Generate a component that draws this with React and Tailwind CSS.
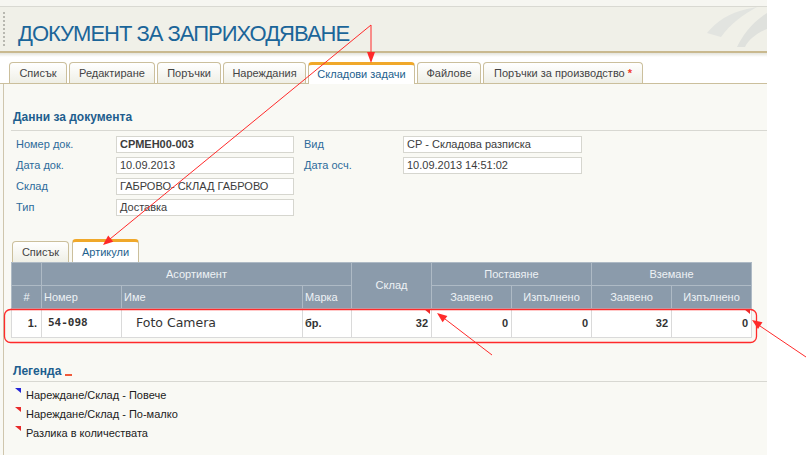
import React from "react";

const tabs = [
  { label: "Списък", w: "w-[58px]" },
  { label: "Редактиране", w: "w-[86px]" },
  { label: "Поръчки", w: "w-[64px]" },
  { label: "Нареждания", w: "w-[83px]" },
  { label: "Складови задачи", w: "w-[107px]", active: true },
  { label: "Файлове", w: "w-[64px]" },
  { label: "Поръчки за производство", w: "w-[160px]", star: true },
];

function Tab({ label, w, active, star }) {
  return (
    <div
      className={
        "h-[21px] flex items-center justify-center rounded-t-[4px] border border-b-0 text-[11px] " +
        w +
        (active
          ? " bg-white border-[#cbbf9c] border-t-[3px] border-t-[#f0a82a] text-[#1d5f8e] -mb-px h-[22px]"
          : " bg-gradient-to-b from-white to-[#efefe6] border-[#cbbf9c] text-[#444]")
      }
    >
      {label}
      {star && <span className="text-[#f03c2c] ml-[3px] font-bold">*</span>}
    </div>
  );
}

function Field({ label, value, bold, inputW = "w-[178px]", labelW = "w-[100px]" }) {
  return (
    <div className="flex items-center h-[17px]">
      <div className={labelW + " text-[11px] text-[#2d6b9b]"}>{label}</div>
      <div
        className={
          inputW +
          " h-[17px] bg-white border border-[#d6d6cf] px-[3px] flex items-center text-[11px] text-[#3c3c3c]" +
          (bold ? " font-bold" : "")
        }
      >
        {value}
      </div>
    </div>
  );
}

function Marker({ color }) {
  return (
    <svg width="6" height="5" className="absolute top-0 right-[1px]">
      <polygon points="0,0 6,0 6,5" fill={color} />
    </svg>
  );
}

export default function App() {
  const th = "border border-[#aebac5] font-normal text-[11px] text-[#eef2f5]";
  const td = "border border-[#dadada] h-[29px] text-[11px] font-bold text-[#333] relative";

  return (
    <div className="w-[806px] h-[455px] bg-white relative overflow-hidden font-['Liberation_Sans',Arial,sans-serif]">
      <div className="w-[767px] h-full bg-[#f9f9f4] flex flex-col">
        {/* header */}
        <div className="h-[7px] bg-[#f6f6f1] border-b border-[#d9d9d2]" />
        <div className="h-[46px] bg-[#f0f0e8] border-b-2 border-[#c9b98f] relative flex items-center">
          <div className="absolute left-[3px] top-[5px] h-[34px] border-l-2 border-dotted border-[#b8b8b0]" />
          <h1 className="ml-[18px] mt-[10px] text-[22px] tracking-[-1px] text-[#1b6599] leading-none">
            ДОКУМЕНТ ЗА ЗАПРИХОДЯВАНЕ
          </h1>
          <svg className="absolute right-0 top-0" width="80" height="44" viewBox="0 0 80 44">
            <path d="M20 26 C30 14 42 6 60 2 L70 0 C56 8 44 16 34 30 Z" fill="#e2e4e0" />
            <path d="M50 40 C56 28 64 16 80 6 L80 22 C70 26 62 32 58 40 Z" fill="#dfe1dd" />
          </svg>
        </div>
        <div className="h-[4px] bg-gradient-to-b from-[#e4e4dc] to-white" />

        {/* main tabs */}
        <div className="bg-white pt-[5px] pl-[9px] flex items-end gap-[2px] border-b border-[#cbbf9c]">
          {tabs.map((t) => (
            <Tab key={t.label} {...t} />
          ))}
        </div>

        {/* panel */}
        <div className="flex-1 ml-[3px] border-l border-[#cfc6ad] bg-[#f9f9f4] pl-[7px]">
          <div className="mt-[27px] h-[20px] border-b border-[#d8d8d2] pl-[2px] text-[12px] font-bold text-[#1e5e8e] leading-none">
            Данни за документа
          </div>
          <div className="mt-[5px] pl-[5px] flex gap-[10px]">
            <div className="flex flex-col gap-[4px]">
              <Field label="Номер док." value="СРМЕН00-003" bold />
              <Field label="Дата док." value="10.09.2013" />
              <Field label="Склад" value="ГАБРОВО- СКЛАД ГАБРОВО" />
              <Field label="Тип" value="Доставка" />
            </div>
            <div className="flex flex-col gap-[4px]">
              <Field label="Вид" value="СР - Складова разписка" labelW="w-[99px]" inputW="w-[179px]" />
              <Field label="Дата осч." value="10.09.2013 14:51:02" labelW="w-[99px]" inputW="w-[179px]" />
            </div>
          </div>

          {/* sub tabs */}
          <div className="mt-[23px] pl-[1px] flex items-end gap-[3px] h-[23px]">
            <div className="w-[57px] h-[21px] rounded-t-[4px] border border-b-0 border-[#cbbf9c] bg-gradient-to-b from-white to-[#efefe6] flex items-center justify-center text-[11px] text-[#444]">
              Списък
            </div>
            <div className="w-[67px] h-[23px] rounded-t-[4px] border border-b-0 border-[#cbbf9c] border-t-[3px] border-t-[#f0a82a] bg-white flex items-center justify-center text-[11px] text-[#1d5f8e]">
              Артикули
            </div>
          </div>

          {/* table */}
          <table className="border-collapse table-fixed w-[740px]">
            <colgroup>
              <col className="w-[30px]" />
              <col className="w-[80px]" />
              <col className="w-[181px]" />
              <col className="w-[49px]" />
              <col className="w-[80px]" />
              <col className="w-[80px]" />
              <col className="w-[80px]" />
              <col className="w-[80px]" />
              <col className="w-[80px]" />
            </colgroup>
            <thead className="bg-[#8b9bab]">
              <tr className="h-[23px]">
                <th className={th}></th>
                <th className={th} colSpan={3}>Асортимент</th>
                <th className={th} rowSpan={2}>Склад</th>
                <th className={th} colSpan={2}>Поставяне</th>
                <th className={th} colSpan={2}>Вземане</th>
              </tr>
              <tr className="h-[23px]">
                <th className={th}>#</th>
                <th className={th + " text-left pl-[2px]"}>Номер</th>
                <th className={th + " text-left pl-[2px]"}>Име</th>
                <th className={th + " text-left pl-[2px]"}>Марка</th>
                <th className={th}>Заявено</th>
                <th className={th}>Изпълнено</th>
                <th className={th}>Заявено</th>
                <th className={th}>Изпълнено</th>
              </tr>
            </thead>
            <tbody className="bg-white">
              <tr>
                <td className={td + " text-right pr-[4px]"}>1.</td>
                <td className={td + " pl-[6px] font-['DejaVu_Sans_Mono',monospace] text-[11px]"}>54-098</td>
                <td className={td + " pl-[14px] text-[13px] font-normal text-[#111]"}>
                  <span className="font-['DejaVu_Sans',sans-serif] text-[12.5px]">Foto Camera</span>
                </td>
                <td className={td + " pl-[2px]"}>бр.</td>
                <td className={td + " text-right pr-[3px]"}>
                  <Marker color="#ee2a2a" />
                  32
                </td>
                <td className={td + " text-right pr-[3px]"}>0</td>
                <td className={td + " text-right pr-[3px]"}>0</td>
                <td className={td + " text-right pr-[3px]"}>32</td>
                <td className={td + " text-right pr-[3px]"}>
                  <Marker color="#ee2a2a" />
                  0
                </td>
              </tr>
            </tbody>
          </table>

          {/* legend */}
          <div className="mt-[27px] h-[17px] border-b border-[#d8d8d2] pl-[2px] flex items-start text-[12px] font-bold text-[#1e5e8e] leading-none">
            Легенда
            <span className="ml-[4px] mt-[9px] w-[7px] h-[2px] bg-[#f05a3a]" />
          </div>
          <div className="mt-[6px] pl-[4px] flex flex-col gap-[5px] text-[11px] text-[#222]">
            {[
              ["#2424d8", "Нареждане/Склад - Повече"],
              ["#e82a2a", "Нареждане/Склад - По-малко"],
              ["#e82a2a", "Разлика в количествата"],
            ].map(([c, t]) => (
              <div key={t} className="flex items-start h-[14px]">
                <svg width="6" height="5" className="mr-[5px]">
                  <polygon points="0,0 6,0 6,5" fill={c} />
                </svg>
                <span className="mt-[2px] leading-none">{t}</span>
              </div>
            ))}
          </div>
        </div>
      </div>

      {/* annotation overlay */}
      <svg className="absolute inset-0 pointer-events-none" width="806" height="455">
        <g stroke="#ff2a2a" strokeWidth="1" fill="none">
          <line x1="371" y1="25" x2="371" y2="53" />
          <line x1="371" y1="25" x2="110" y2="239" />
          <line x1="492" y1="355" x2="445" y2="319" />
          <line x1="806" y1="357" x2="760" y2="326" />
          <rect x="4.5" y="309.5" width="752" height="33" rx="6" strokeWidth="1.3" />
        </g>
        <g fill="#ff2a2a">
          <polygon points="367,52 375,52 371,63" />
          <polygon points="113.2,241.8 108.2,235.6 103,245" />
          <polygon points="447.4,315.9 442.6,322.3 437,313" />
          <polygon points="762.5,322.3 758,328.9 752,320" />
        </g>
      </svg>
    </div>
  );
}
